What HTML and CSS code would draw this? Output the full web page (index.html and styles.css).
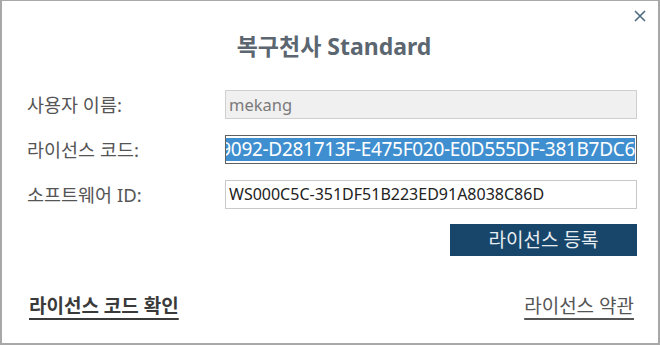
FILE: index.html
```html
<!DOCTYPE html>
<html lang="ko">
<head>
    <meta charset="UTF-8">
    <meta name="viewport" content="width=device-width, initial-scale=1.0">
    <title>복구천사 Standard - 라이선스</title>
    <link rel="stylesheet" href="styles.css">
</head>
<body>
    <div class="dialog">
        <div class="close" title="닫기">
            <svg width="12" height="12" viewBox="0 0 12 12">
                <path d="M1 1 L11 11 M11 1 L1 11" stroke="#4d6a80" stroke-width="1.6" fill="none"/>
            </svg>
        </div>

        <h1 class="title">복구천사 Standard</h1>

        <div class="form">
            <label class="label">사용자 이름:</label>
            <div class="field disabled">mekang</div>

            <label class="label">라이선스 코드:</label>
            <div class="field focused">
                <span class="selected">9092-D281713F-E475F020-E0D555DF-381B7DC6</span>
            </div>

            <label class="label">소프트웨어 ID:</label>
            <div class="field">WS000C5C-351DF51B223ED91A8038C86D</div>
        </div>

        <div class="actions">
            <button class="register">라이선스 등록</button>
        </div>

        <div class="links">
            <a href="#" class="link strong">라이선스 코드 확인</a>
            <a href="#" class="link">라이선스 약관</a>
        </div>
    </div>
</body>
</html>
```

FILE: styles.css
```css
body {
    margin: 0;
    padding: 0;
    background-color: #ffffff;
    font-family: 'Noto Sans', 'Noto Sans CJK KR', sans-serif;
    color: #555;
}
.dialog {
    position: relative;
    width: 660px;
    height: 345px;
    box-sizing: border-box;
    border: 2px solid #a8a8a8;
    border-top-width: 1px;
    background: #fff;
    padding: 0 22px 0 26px;
}
.close {
    position: absolute;
    top: 9px;
    right: 12px;
    width: 12px;
    height: 12px;
    cursor: pointer;
}
.close svg {
    display: block;
}
.title {
    margin: 0;
    padding-top: 30px;
    height: 58px;
    box-sizing: border-box;
    text-align: center;
    font-size: 23px;
    line-height: 30px;
    font-weight: 700;
    color: #5b6670;
    padding-left: 4px;
}
.form {
    display: grid;
    grid-template-columns: 197px 412px;
    row-gap: 16px;
    margin-top: 31px;
    align-items: center;
}
.label {
    font-size: 18.5px;
    color: #555;
    line-height: 29px;
    margin-left: -1px;
}
.field {
    height: 29px;
    box-sizing: border-box;
    border: 1px solid #c9c9c9;
    background: #fff;
    font-size: 16px;
    line-height: 27px;
    padding: 0 3px;
    color: #222;
    white-space: nowrap;
    overflow: hidden;
}
.field.disabled {
    background: #f0f0f0;
    color: #7a7a7a;
    border-color: #cfcfcf;
    font-size: 16.5px;
}
.field.focused {
    border-color: #5f5f5f;
    display: flex;
    justify-content: flex-end;
    padding: 2px 1px 2px 0;
}
.selected {
    background: #3f8fd0;
    color: #fff;
    font-size: 19px;
    line-height: 23px;
    letter-spacing: -0.3px;
}
.actions {
    display: flex;
    justify-content: flex-end;
    margin-top: 15px;
}
.register {
    width: 187px;
    height: 32px;
    border: none;
    background-color: #17466a;
    color: #e8edf1;
    font-family: 'Noto Sans', 'Noto Sans CJK KR', sans-serif;
    font-size: 19px;
    line-height: 30px;
    padding: 0;
    cursor: pointer;
    margin-right: -1px;
}
.links {
    display: flex;
    justify-content: space-between;
    margin-top: 35px;
    padding-right: 2px;
    padding-left: 1px;
}
.link {
    font-size: 19px;
    color: #555;
    text-decoration: underline;
    text-underline-offset: 5px;
    text-decoration-thickness: 1.5px;
}
.link.strong {
    font-weight: 700;
    color: #3a3a3a;
}
```
